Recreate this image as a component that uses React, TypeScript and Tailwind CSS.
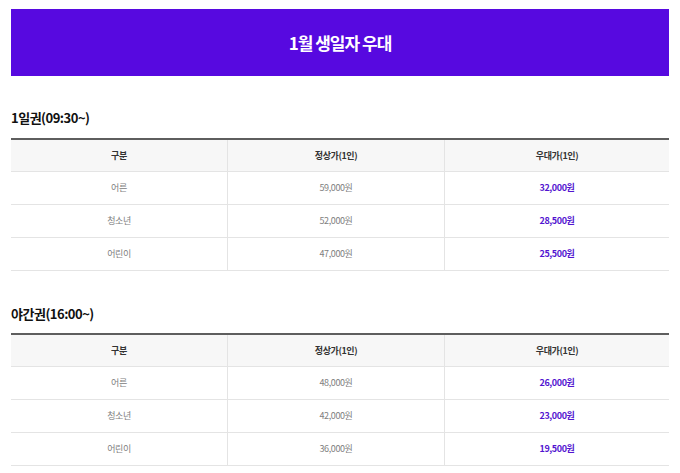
import React from "react";

type Row = { label: string; normal: string; deal: string };

const day: Row[] = [
  { label: "어른", normal: "59,000원", deal: "32,000원" },
  { label: "청소년", normal: "52,000원", deal: "28,500원" },
  { label: "어린이", normal: "47,000원", deal: "25,500원" },
];

const night: Row[] = [
  { label: "어른", normal: "48,000원", deal: "26,000원" },
  { label: "청소년", normal: "42,000원", deal: "23,000원" },
  { label: "어린이", normal: "36,000원", deal: "19,500원" },
];

function PriceTable({ rows }: { rows: Row[] }) {
  return (
    <div className="border-t-2 border-[#5e5e5e]">
      <div className="grid grid-cols-[217px_217px_1fr] h-[32px] bg-[#f7f7f7] border-b border-[#e4e4e4] text-[9px] font-bold text-[#333] tracking-[-0.4px]">
        <div className="flex items-center justify-center border-r border-[#e4e4e4]">구분</div>
        <div className="flex items-center justify-center border-r border-[#e4e4e4]">정상가(1인)</div>
        <div className="flex items-center justify-center">우대가(1인)</div>
      </div>
      {rows.map((r) => (
        <div
          key={r.label}
          className="grid grid-cols-[217px_217px_1fr] h-[33px] border-b border-[#e4e4e4] text-[9px] tracking-[-0.4px]"
        >
          <div className="flex items-center justify-center border-r border-[#e4e4e4] text-[#808080]">{r.label}</div>
          <div className="flex items-center justify-center border-r border-[#e4e4e4] text-[#808080]">{r.normal}</div>
          <div className="flex items-center justify-center font-bold text-[#5214d0]">{r.deal}</div>
        </div>
      ))}
    </div>
  );
}

export default function App() {
  return (
    <div
      className="w-[680px] h-[473px] bg-white px-[11px] pt-[9px]"
      style={{ fontFamily: '"Noto Sans CJK KR", "Noto Sans", sans-serif' }}
    >
      <div className="h-[67px] bg-[#5709e0] flex items-center justify-center">
        <h1 className="text-white text-[17px] font-bold tracking-[-1px]">1월 생일자 우대</h1>
      </div>

      <h2 className="mt-[32px] mb-[10px] h-[20px] leading-[20px] text-[13px] font-bold text-[#111] tracking-[-0.5px]">
        1일권(09:30~)
      </h2>
      <PriceTable rows={day} />

      <h2 className="mt-[33px] mb-[9px] h-[20px] leading-[20px] text-[13px] font-bold text-[#111] tracking-[-0.5px]">
        야간권(16:00~)
      </h2>
      <PriceTable rows={night} />
    </div>
  );
}
